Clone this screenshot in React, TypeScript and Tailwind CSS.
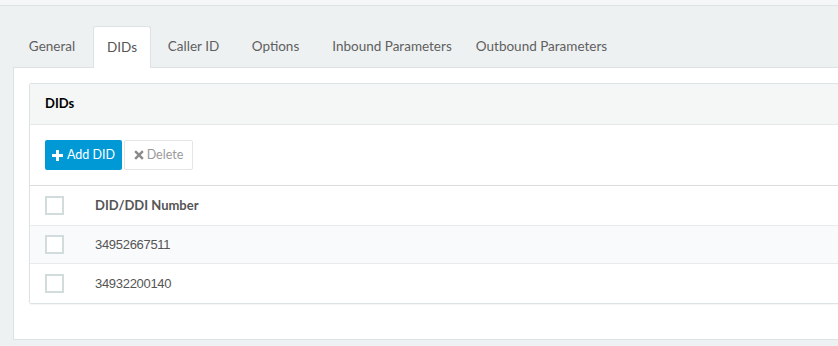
import React from 'react';

const tabs = [
    { label: 'General', w: 'w-[78px]' },
    { label: 'DIDs', w: 'w-[58px]' },
    { label: 'Caller ID', w: 'w-[81px]' },
    { label: 'Options', w: 'w-[79px]' },
    { label: 'Inbound Parameters', w: 'w-[150px]' },
    { label: 'Outbound Parameters', w: 'w-[145px]' },
];
const rows = ['34952667511', '34932200140'];

const Checkbox: React.FC = () => (
    <span className="block w-[19px] h-[19px] border-2 border-[#d3dcdc] bg-white"></span>
);

export default function App() {
    return (
        <div
            className="w-[838px] h-[346px] overflow-hidden bg-[#eef1f2] text-[#555]"
            style={{ fontFamily: '"Source Sans Pro", Lato, "Noto Sans", sans-serif' }}
        >
            <div className="h-[6px] bg-[#f4f6f7] border-b border-[#dde2e4]"></div>
            <div className="pl-[13px] pt-[20px]">
                {/* tabs */}
                <div className="flex h-[41px] items-stretch">
                    {tabs.map((t) => {
                        const active = t.label === 'DIDs';
                        return (
                            <div
                                key={t.label}
                                className={
                                    (active
                                        ? 'relative z-10 -mb-px bg-white border border-b-0 border-[#dde2e4] rounded-t-[3px] text-[#555] '
                                        : 'text-[#5f5f5f] ') +
                                    t.w +
                                    ' mr-[2px] flex items-center justify-center text-[13.5px] whitespace-nowrap'
                                }
                            >
                                {t.label}
                            </div>
                        );
                    })}
                </div>

                {/* panel */}
                <div className="w-[900px] h-[273px] bg-white border border-[#dde2e4] pt-[15px] pl-[15px]">
                    <div className="border border-[#dde2e4] rounded-[2px] shadow-[0_1px_1px_rgba(0,0,0,0.04)]">
                        <div className="h-[41px] flex items-center px-[15px] bg-[#f5f6f6] border-b border-[#e6e9ea] text-[13px] font-bold text-black">
                            DIDs
                        </div>
                        <div className="h-[61px] flex items-center gap-[2px] px-[15px] border-b border-[#dcdcdc]">
                            <button className="h-[30px] w-[77px] flex items-center justify-center gap-[4px] bg-[#0099d6] rounded-[2px] text-white text-[12.5px]">
                                <svg width="11" height="11" viewBox="0 0 11 11">
                                    <path d="M4 0h3v4h4v3H7v4H4V7H0V4h4z" fill="white" />
                                </svg>
                                Add DID
                            </button>
                            <button className="h-[30px] w-[69px] flex items-center justify-center gap-[3px] bg-white border border-[#e3e6e7] rounded-[2px] text-[#999] text-[12.5px]">
                                <svg width="10" height="10" viewBox="0 0 10 10">
                                    <path d="M2 0.3L5 3.3L8 0.3L9.7 2L6.7 5L9.7 8L8 9.7L5 6.7L2 9.7L0.3 8L3.3 5L0.3 2z" fill="#8a8a8a" />
                                </svg>
                                Delete
                            </button>
                        </div>
                        <div className="h-[40px] flex items-center px-[15px] border-b border-[#e8eaeb]">
                            <Checkbox />
                            <span className="ml-[31px] text-[13px] font-bold text-[#555]">DID/DDI Number</span>
                        </div>
                        {rows.map((r, i) => (
                            <div
                                key={r}
                                className={
                                    'flex items-center px-[15px] ' +
                                    (i === 0 ? 'h-[38px] bg-[#f9fafb] border-b border-[#e8eaeb]' : 'h-[39px] bg-white')
                                }
                            >
                                <Checkbox />
                                <span
                                    className="ml-[31px] text-[13px] tracking-[-0.3px] text-[#555]"
                                    style={{ fontFamily: '"Liberation Sans", Arial, sans-serif' }}
                                >
                                    {r}
                                </span>
                            </div>
                        ))}
                    </div>
                </div>
            </div>
        </div>
    );
}
